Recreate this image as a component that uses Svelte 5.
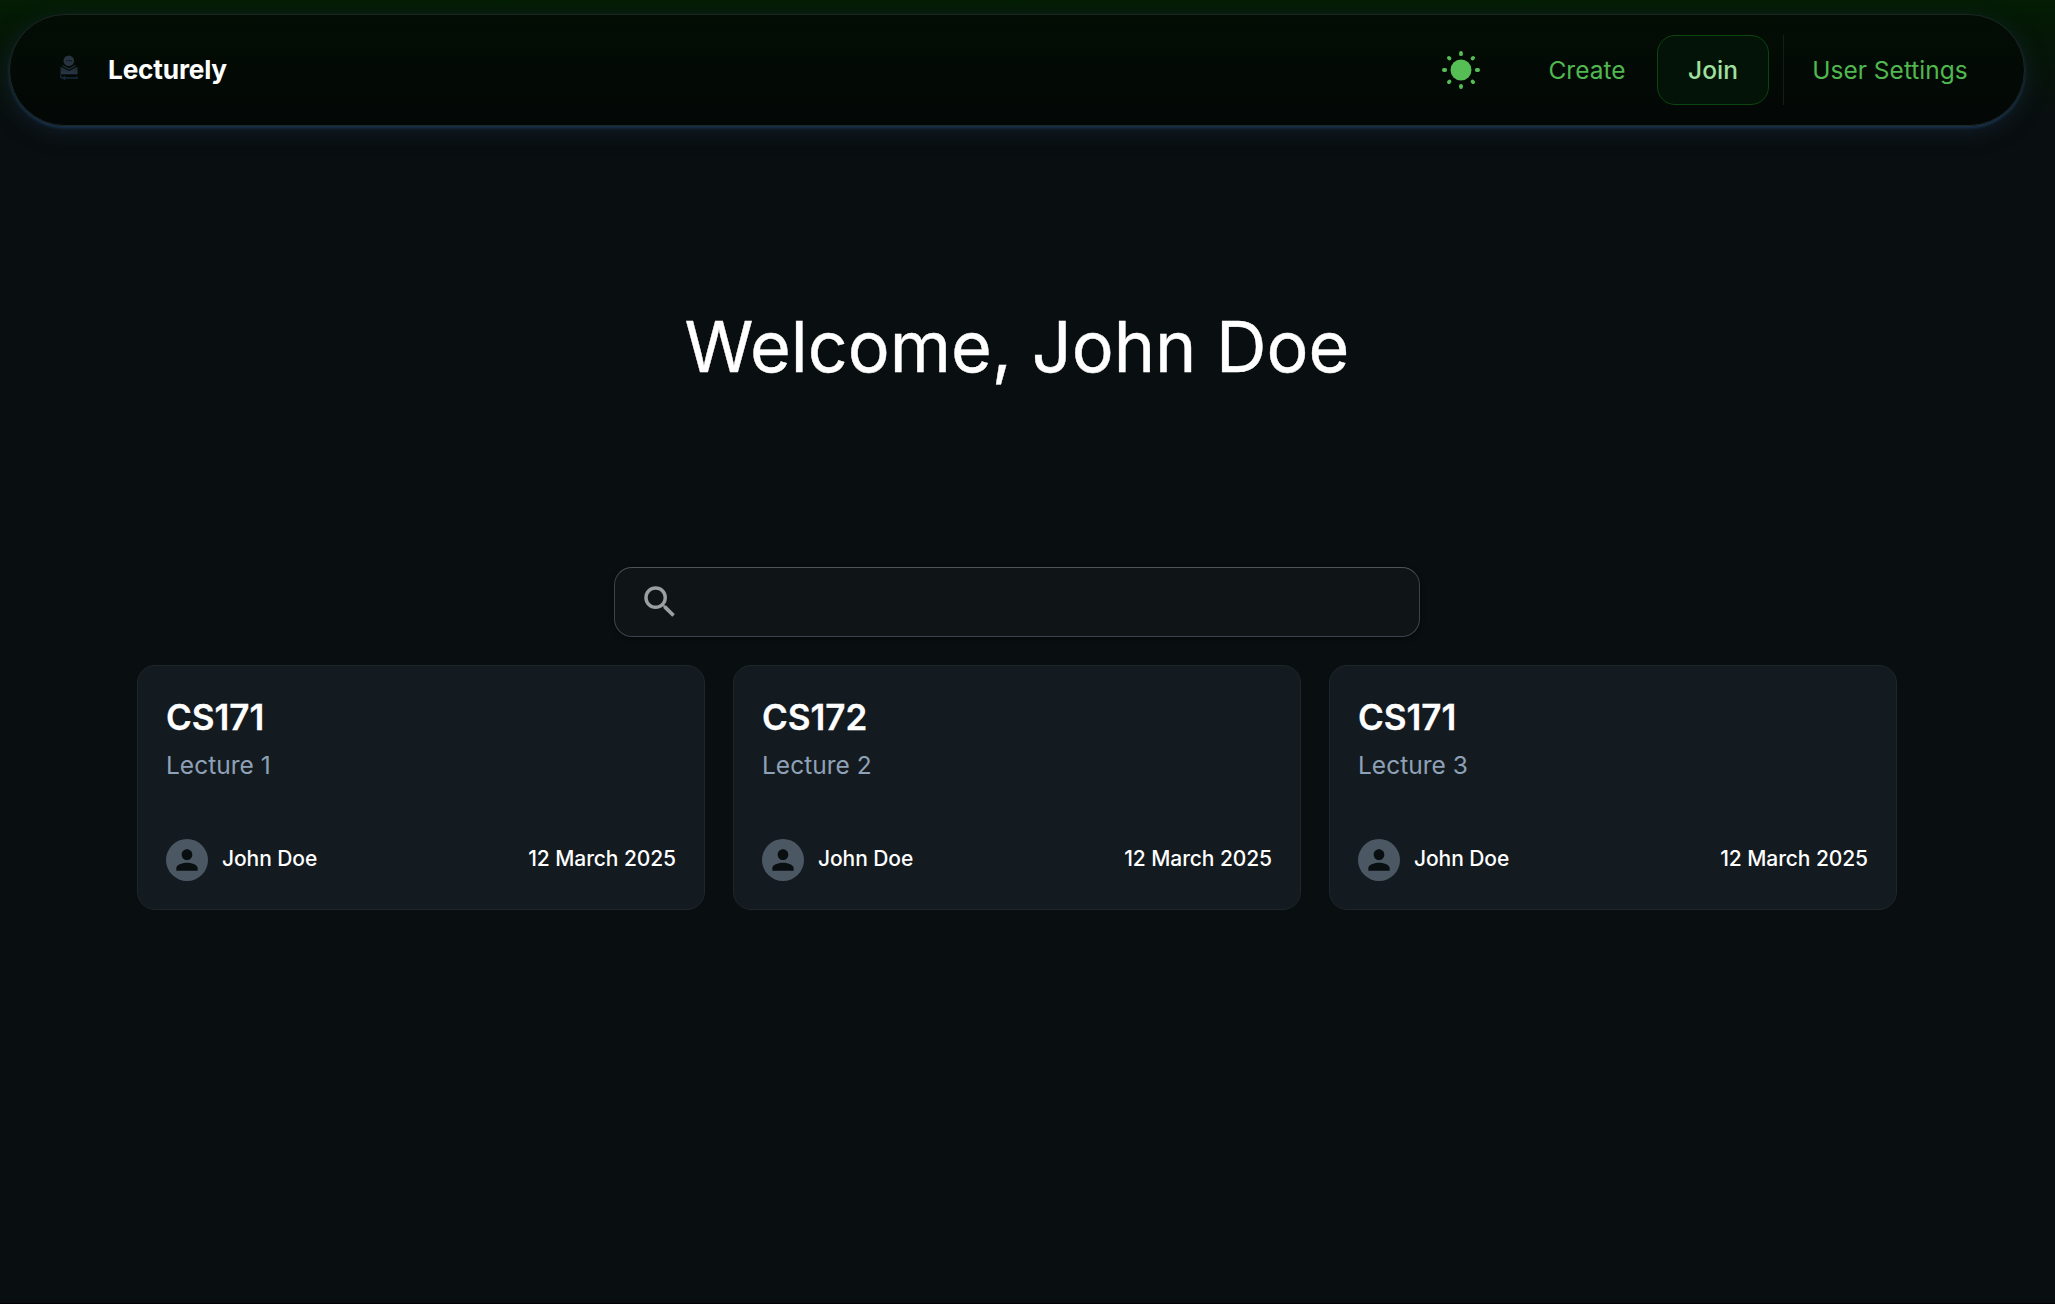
<script>
  const lectures = [
    { course: 'CS171', title: 'Lecture 1', author: 'John Doe', date: '12 March 2025' },
    { course: 'CS172', title: 'Lecture 2', author: 'John Doe', date: '12 March 2025' },
    { course: 'CS171', title: 'Lecture 3', author: 'John Doe', date: '12 March 2025' }
  ];
</script>

<div class="page">
  <header class="nav">
    <svg class="logo" viewBox="0 0 18 26">
      <defs>
        <linearGradient id="ink" x1="0" y1="0" x2="0" y2="1">
          <stop offset="0" stop-color="#1d2a35" />
          <stop offset="1" stop-color="#2a3744" />
        </linearGradient>
      </defs>
      <circle cx="8.800" cy="5.700" r="5.300" fill="#283541" />
      <path d="M6 5.700h6" stroke="#111c22" stroke-width="1.6" stroke-dasharray="1.500 .7" />
      <path d="M2.500 10.500 9 14l6.500-3.500" fill="none" stroke="#222e39" stroke-width="1.200" />
      <path d="M.5 12.500 1.500 12 9 16l7.500-4 1 .5v6.800H.5z" fill="url(#ink)" />
      <path d="M.8 20c-.6 1.800.4 3 1.800 3H17v-1.500" fill="none" stroke="#1a2a3e" stroke-width="1.500" />
      <path d="m5.200 20.500-3 2.500 3 2.500z" fill="#1a2a3e" />
    </svg>
    <span class="brand">Lecturely</span>
    <nav class="links">
      <button class="theme" aria-label="Toggle theme">
        <svg viewBox="0 0 38 38">
          <circle cx="19" cy="19" r="10.500" fill="currentColor" />
          <g stroke="currentColor" stroke-width="3.800" stroke-linecap="round">
            <path d="M19 1.900v1.300M19 34.800v1.300M1.900 19h1.300M34.800 19h1.300M6.900 6.900l.6.600M30.500 30.500l.6.600M6.900 31.100l.6-.6M30.500 7.500l.6-.6" />
          </g>
        </svg>
      </button>
      <button class="link">Create</button>
      <button class="link join">Join</button>
      <span class="divider"></span>
      <button class="link settings">User Settings</button>
    </nav>
  </header>

  <main>
    <h1>Welcome, John Doe</h1>
    <label class="search">
      <svg viewBox="0 0 24 24">
        <path fill="currentColor" d="M15.500 14h-.79l-.28-.27A6.471 6.471 0 0 0 16 9.500 6.500 6.500 0 1 0 9.500 16c1.610 0 3.090-.59 4.230-1.570l.27.28v.79l5 4.990L20.490 19zm-6 0C7.010 14 5 11.990 5 9.500S7.010 5 9.500 5 14 7.010 14 9.500 11.990 14 9.500 14" />
      </svg>
      <input type="text" aria-label="Search" />
    </label>
    <section class="cards">
      {#each lectures as lecture}
        <article>
          <h2>{lecture.course}</h2>
          <p class="title">{lecture.title}</p>
          <footer>
            <span class="avatar">
              <svg viewBox="0 0 24 24">
                <path fill="currentColor" d="M12 12c2.210 0 4-1.790 4-4s-1.790-4-4-4-4 1.790-4 4 1.790 4 4 4m0 2c-2.670 0-8 1.340-8 4v2h16v-2c0-2.660-5.330-4-8-4" />
              </svg>
            </span>
            <span class="author">{lecture.author}</span>
            <time>{lecture.date}</time>
          </footer>
        </article>
      {/each}
    </section>
  </main>
</div>

<style>
  :global(body) {
    background: #090e10;
  }
  .page {
    box-sizing: border-box;
    height: 1304px;
    padding: 14px 21px 0 0;
    border-bottom: 1px solid #000;
    background: linear-gradient(#041d04 0, #041a04 14px, #03150400 120px) no-repeat, #090e10;
    font-family: Inter, sans-serif;
    color: #fff;
    overflow: hidden;
  }
  button {
    border: 0;
    padding: 0;
    background: none;
    font: inherit;
    color: inherit;
    letter-spacing: inherit;
  }
  .nav {
    box-sizing: border-box;
    display: flex;
    align-items: center;
    height: 112px;
    margin: 0 9px;
    padding: 0 28px 0 50px;
    border: 1px solid #1c2625;
    border-radius: 56px;
    background: linear-gradient(#030d04, #030706);
    box-shadow: 0 2px 3px #1a3450, 0 5px 21px #1c304480;
  }
  .logo {
    width: 18px;
    height: 26px;
    margin-bottom: 5px;
  }
  .brand {
    margin-left: 30px;
    padding-bottom: 1px;
    font-size: 26.250px;
    font-weight: 700;
    letter-spacing: -0.2px;
  }
  .links {
    display: flex;
    align-items: center;
    margin-left: auto;
    font-size: 24.500px;
    color: #50b84f;
  }
  .theme {
    width: 38px;
    height: 38px;
    margin-right: 37px;
    padding-bottom: 2px;
    color: #55be55;
  }
  .theme svg {
    display: block;
    width: 38px;
    height: 38px;
  }
  .link {
    box-sizing: border-box;
    width: 140px;
    height: 70px;
  }
  .join {
    width: 112px;
    border: 1px solid #0c460f;
    border-radius: 18px;
    background: #041307;
    color: #a0e0a0;
    font-weight: 450;
  }
  .divider {
    width: 1px;
    height: 70px;
    margin: 0 0 0 14px;
    background: #151d1a;
  }
  .settings {
    width: 212px;
  }
  main {
    display: flex;
    flex-direction: column;
    align-items: center;
  }
  h1 {
    margin: 171px 0 0;
    font-size: 70px;
    line-height: 100px;
    font-weight: 400;
    -webkit-text-stroke: 0.4px currentColor;
  }
  .search {
    box-sizing: border-box;
    display: flex;
    align-items: center;
    width: 806px;
    height: 70px;
    margin: 170px 0 28px;
    padding: 0 24px;
    border: 1px solid #3b444c;
    border-top-color: #4d5357;
    border-radius: 18px;
    background: #0f1417;
    box-shadow: 0 2px 5px #0006;
  }
  .search svg {
    width: 42px;
    height: 42px;
    color: #9c9fa1;
  }
  input {
    flex: 1;
    border: 0;
    background: none;
    outline: 0;
    color: #fff;
    font: inherit;
  }
  .cards {
    display: grid;
    grid-template-columns: repeat(3, 1fr);
    gap: 28px;
    width: 1760px;
  }
  article {
    box-sizing: border-box;
    height: 245px;
    padding: 27px 28px 28px;
    border: 1px solid #1f2529;
    border-radius: 18px;
    background: #141b20;
  }
  h2 {
    margin: 0;
    font-size: 35px;
    line-height: 49px;
    font-weight: 600;
    -webkit-text-stroke: 0.3px currentColor;
  }
  .title {
    margin: 4px 0 0;
    font-size: 24.500px;
    line-height: 38px;
    color: #8fa1b6;
  }
  footer {
    display: flex;
    align-items: center;
    gap: 14px;
    margin-top: 55px;
    font-size: 21px;
    font-weight: 500;
    letter-spacing: -0.08px;
  }
  .avatar {
    display: grid;
    place-items: center;
    width: 42px;
    height: 42px;
    border-radius: 50%;
    background: #4b5864;
    color: #090e10;
  }
  .avatar svg {
    width: 32px;
    height: 32px;
  }
  .author,
  time {
    padding-bottom: 4px;
  }
  time {
    margin-left: auto;
  }
</style>
